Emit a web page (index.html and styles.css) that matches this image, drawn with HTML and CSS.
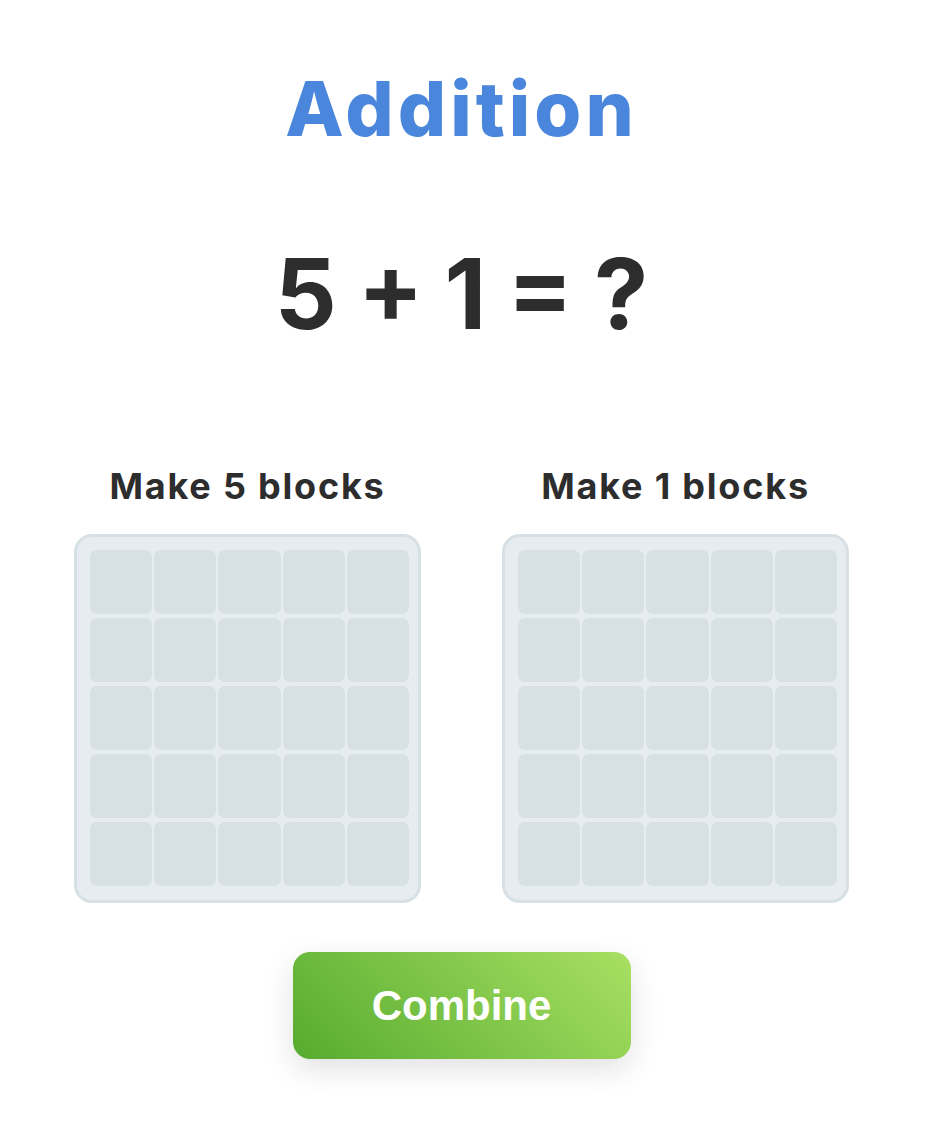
FILE: index.html
```html
<!DOCTYPE html>
<html lang="en">
<head>
    <meta charset="UTF-8">
    <meta name="viewport" content="width=device-width, initial-scale=1.0">
    <title>Addition</title>
    <link rel="stylesheet" href="styles.css">
</head>
<body>

<div class="app">
    <h1 class="title">Addition</h1>

    <div class="equation">5 + 1 = ?</div>

    <!-- Two block boards -->
    <div class="boards">
        <div class="board">
            <h2 class="board-label">Make 5 blocks</h2>
            <div class="grid" id="grid-a"></div>
        </div>
        <div class="board">
            <h2 class="board-label">Make 1 blocks</h2>
            <div class="grid" id="grid-b"></div>
        </div>
    </div>

    <button class="combine-btn">Combine</button>
</div>

<script>
    // Fill each board with 25 empty cells
    document.querySelectorAll('.grid').forEach(grid => {
        for (let i = 0; i < 25; i++) {
            const cell = document.createElement('div');
            cell.classList.add('cell');
            grid.appendChild(cell);
        }
    });
</script>

</body>
</html>
```

FILE: styles.css
```css
/* Basic styling */
body {
    font-family: Inter, "Noto Sans", sans-serif;
    background-color: #fff;
    margin: 0;
    padding: 0;
}
.app {
    width: 923px;
    padding-bottom: 70px;
    display: flex;
    flex-direction: column;
    align-items: center;
}
.title {
    margin: 70px 0 0;
    font-size: 76px;
    line-height: 1;
    font-weight: 800;
    letter-spacing: 4px;
    color: #4a86db;
}
.equation {
    margin-top: 99px;
    font-size: 97px;
    line-height: 1;
    font-weight: 700;
    color: #2d2d2d;
    word-spacing: -2px;
}
/* Boards */
.boards {
    display: flex;
    gap: 81px;
    margin-top: 126px;
}
.board {
    display: flex;
    flex-direction: column;
    align-items: center;
}
.board-label {
    margin: 0 0 30px;
    font-size: 36px;
    line-height: 1;
    font-weight: 700;
    letter-spacing: 1.8px;
    color: #2d2d2d;
}
.grid {
    box-sizing: border-box;
    width: 347px;
    padding: 13px 9px 14px 13px;
    background-color: #e6ecf0;
    border: 3px solid #d6e0e5;
    border-radius: 18px;
    display: grid;
    grid-template-columns: repeat(5, 1fr);
    grid-auto-rows: 64px;
    column-gap: 2px;
    row-gap: 4px;
}
.cell {
    background-color: #d7e0e5;
    border-radius: 7px;
}
/* Button */
.combine-btn {
    margin-top: 49px;
    width: 338px;
    height: 107px;
    border: none;
    border-radius: 17px;
    background: linear-gradient(45deg, #56ab2f, #a8e063);
    box-shadow: 0 10px 30px rgba(0, 0, 0, 0.12);
    color: #fff;
    font-family: "Liberation Sans", Arial, sans-serif;
    font-size: 42px;
    font-weight: 700;
    cursor: pointer;
}
```
